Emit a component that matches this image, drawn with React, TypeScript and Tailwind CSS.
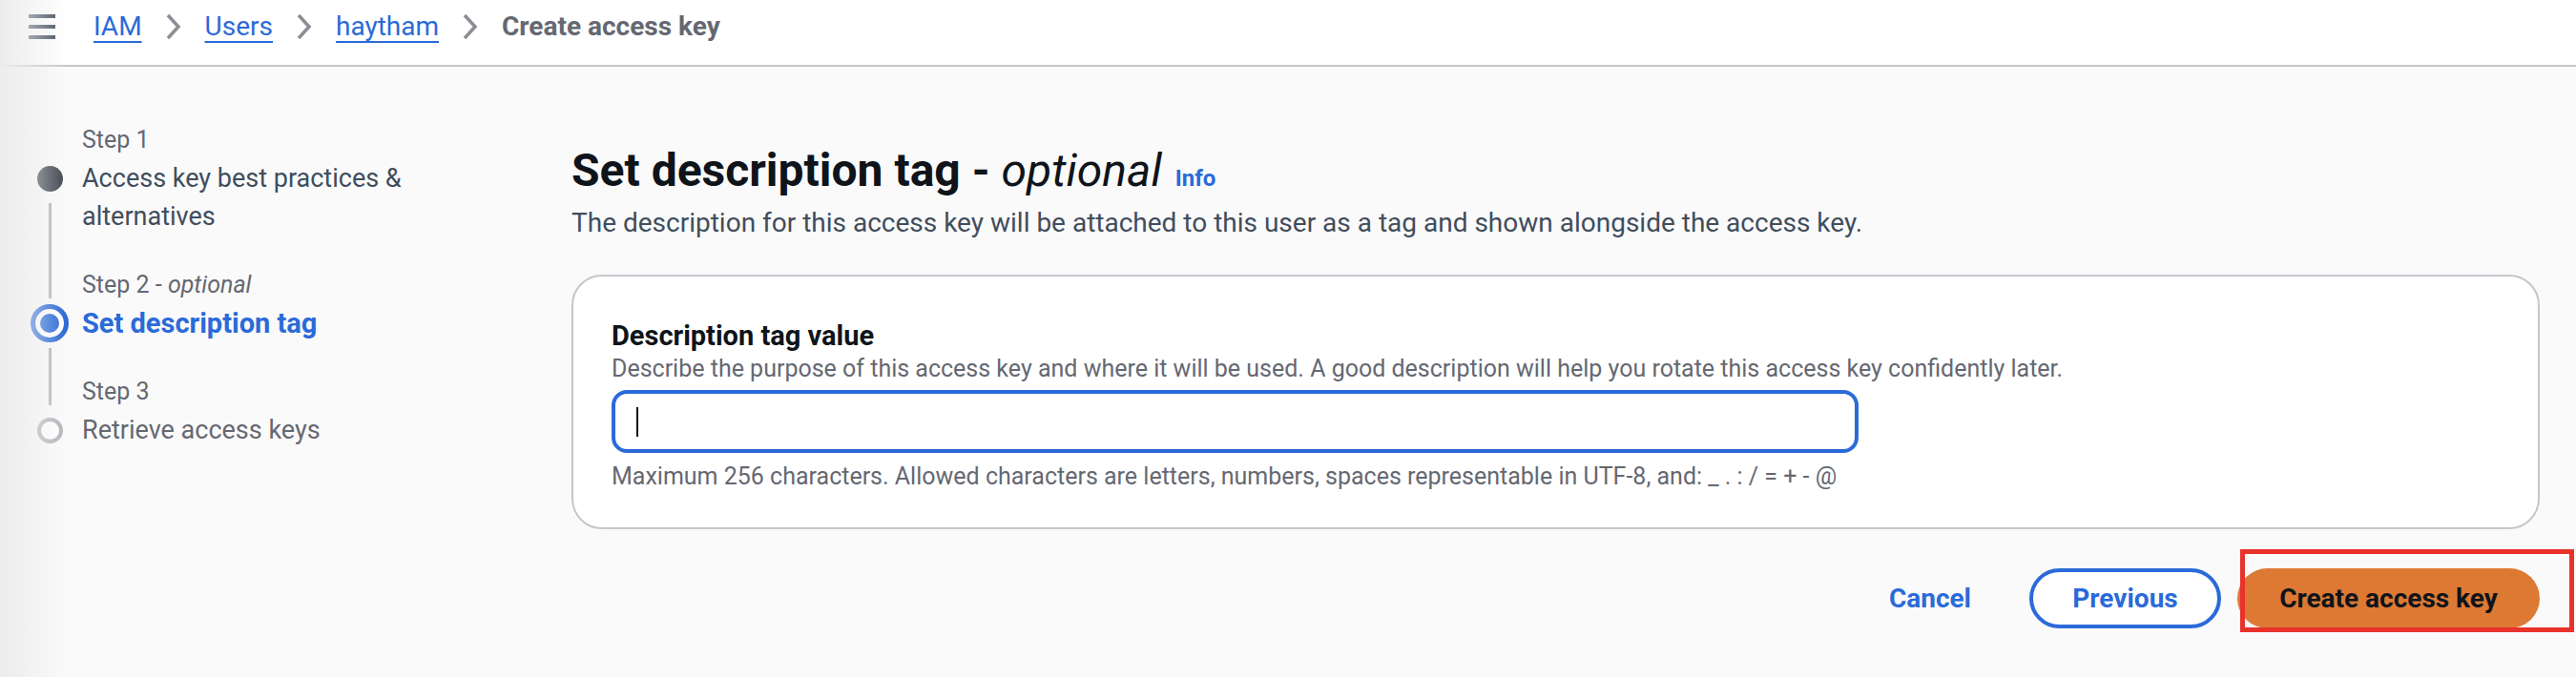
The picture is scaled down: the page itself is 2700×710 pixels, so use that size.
import React from "react";

const font = { fontFamily: "Roboto, 'Liberation Sans', sans-serif" };

const steps = [
  { label: "Step 1", title: ["Access key best practices &", "alternatives"], state: "done" },
  { label: "Step 2", optional: true, title: ["Set description tag"], state: "current" },
  { label: "Step 3", title: ["Retrieve access keys"], state: "todo" },
];

function Chevron() {
  return (
    <svg width="18" height="28" viewBox="0 0 18 28" className="mx-[24px]">
      <path d="M3 2 L14 14 L3 26" fill="none" stroke="#8c8c94" strokeWidth="3.5" />
    </svg>
  );
}

function StepDot({ state }: { state: string }) {
  if (state === "done") return <div className="w-[27px] h-[27px] rounded-full bg-[#3f4550]" />;
  if (state === "current")
    return (
      <div className="w-[40px] h-[40px] rounded-full border-[5px] border-[#2b6ad9] bg-white flex items-center justify-center">
        <div className="w-[20px] h-[20px] rounded-full bg-[#2b6ad9]" />
      </div>
    );
  return <div className="w-[27px] h-[27px] rounded-full border-[4px] border-[#b4b4bb] bg-white" />;
}

function Steps() {
  return (
    <div className="w-[599px] shrink-0 pt-[57px] pl-[32px]">
      {steps.map((s, i) => (
        <div key={i} className="flex">
          <div className="w-[40px] flex flex-col items-center">
            <div className="h-[40px] flex justify-center">
              {i > 0 && <div className="w-[3px] h-[34px] bg-[#b4b4bb]" />}
            </div>
            <div className="h-[40px] flex items-center justify-center">
              <StepDot state={s.state} />
            </div>
            <div className="flex-1 flex justify-center pt-[6px]">
              {i < steps.length - 1 && <div className="w-[3px] h-full bg-[#b4b4bb]" />}
            </div>
          </div>
          <div className={"pl-[14px] " + (i < steps.length - 1 ? "pb-[32px]" : "")}>
            <div className="h-[40px] leading-[40px] text-[25px] text-[#656871]">
              {s.label}
              {s.optional && <span> - <i>optional</i></span>}
            </div>
            {s.title.map((t, j) => (
              <div
                key={j}
                className={
                  "h-[40px] leading-[40px] " +
                  (s.state === "current"
                    ? "text-[29px] font-bold text-[#2b6ad9]"
                    : s.state === "done"
                    ? "text-[27px] text-[#414d5c]"
                    : "text-[27px] text-[#656871]")
                }
              >
                {t}
              </div>
            ))}
          </div>
        </div>
      ))}
    </div>
  );
}

export default function App() {
  return (
    <div className="relative w-full h-[710px] bg-[#fafafa] overflow-hidden" style={font}>
      <div className="absolute left-0 top-0 bottom-0 w-[70px] bg-gradient-to-r from-[#ececec] to-transparent pointer-events-none" />

      {/* Breadcrumbs */}
      <div className="h-[70px] bg-white border-b-2 border-[#c6c6cd] flex items-center pl-[30px] pb-[12px]">
        <div className="flex flex-col gap-[7px] mr-[40px]">
          <div className="w-[28px] h-[4px] bg-[#414d5c]" />
          <div className="w-[28px] h-[4px] bg-[#414d5c]" />
          <div className="w-[28px] h-[4px] bg-[#414d5c]" />
        </div>
        <a className="text-[28px] text-[#2b6ad9] underline underline-offset-[6px] decoration-2">IAM</a>
        <Chevron />
        <a className="text-[28px] text-[#2b6ad9] underline underline-offset-[6px] decoration-2">Users</a>
        <Chevron />
        <a className="text-[28px] text-[#2b6ad9] underline underline-offset-[6px] decoration-2">haytham</a>
        <Chevron />
        <span className="text-[28px] font-bold text-[#656871]">Create access key</span>
      </div>

      <div className="flex">
        <Steps />

        <div className="flex-1 pt-[81px] pr-[38px]">
          <div className="flex items-baseline h-[56px]">
            <h1 className="text-[48px] leading-[56px] font-bold text-[#0f141a]">
              Set description tag - <i className="font-normal">optional</i>
            </h1>
            <a className="ml-[14px] text-[24px] font-bold text-[#2b6ad9]">Info</a>
          </div>
          <p className="mt-[7px] text-[28px] leading-[40px] text-[#414d5c]">
            The description for this access key will be attached to this user as a tag and shown alongside the access key.
          </p>

          <div className="mt-[34px] h-[267px] rounded-[32px] border-2 border-[#c6c6cd] bg-white px-[40px] pt-[44px]">
            <div className="text-[29px] leading-[36px] font-bold text-[#0f141a]">Description tag value</div>
            <div className="mt-[1px] text-[25px] leading-[32px] text-[#656871]">
              Describe the purpose of this access key and where it will be used. A good description will help you rotate this access key confidently later.
            </div>
            <div className="mt-[6px] w-[1307px] h-[66px] rounded-[16px] border-[4px] border-[#2b6ad9] bg-white flex items-center pl-[22px]">
              <div className="w-[2px] h-[31px] bg-[#0f141a]" />
            </div>
            <div className="mt-[9px] text-[25px] leading-[32px] text-[#656871]">
              Maximum 256 characters. Allowed characters are letters, numbers, spaces representable in UTF-8, and: _ . : / = + - @
            </div>
          </div>

          <div className="mt-[41px] flex justify-end items-center gap-[17px]">
            <button className="h-[63px] px-[44px] text-[28px] font-bold text-[#2b6ad9]">Cancel</button>
            <button className="h-[63px] w-[201px] rounded-full border-[4px] border-[#2b6ad9] bg-white text-[28px] font-bold text-[#2b6ad9]">
              Previous
            </button>
            <div className="relative">
              <button className="h-[63px] w-[317px] rounded-full bg-[#de7934] text-[28px] font-bold text-[#0f141a]">
                Create access key
              </button>
              <div className="absolute left-[3px] -top-[20px] w-[350px] h-[87px] border-[5px] border-[#e8322a] pointer-events-none" />
            </div>
          </div>
        </div>
      </div>
    </div>
  );
}
